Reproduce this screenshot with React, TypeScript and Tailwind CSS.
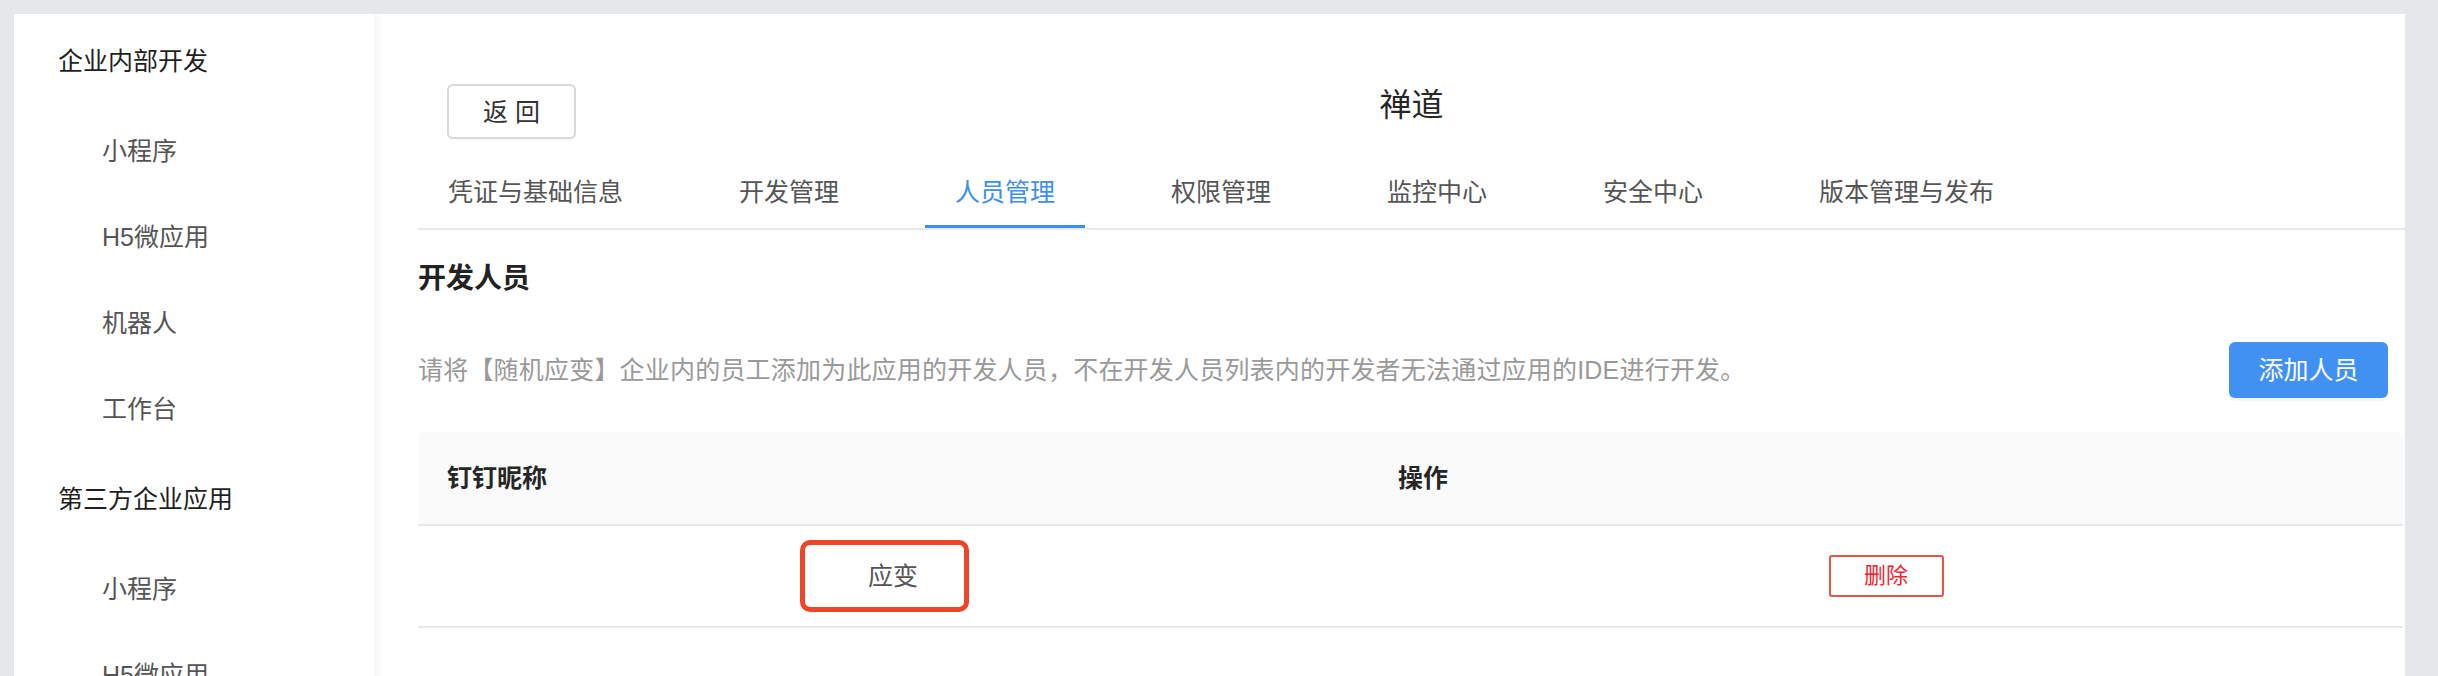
import React from 'react';

const sideGroups = [
  { title: '企业内部开发', items: ['小程序', 'H5微应用', '机器人', '工作台'] },
  { title: '第三方企业应用', items: ['小程序', 'H5微应用', '机器人', '工作台'] },
];

const tabs = ['凭证与基础信息', '开发管理', '人员管理', '权限管理', '监控中心', '安全中心', '版本管理与发布'];
const activeTab = '人员管理';

const Sidebar: React.FC = () => (
  <aside className="w-[360px] shrink-0 bg-white overflow-hidden">
    {sideGroups.map((group) => (
      <div key={group.title}>
        <div className="h-[94px] flex items-center pl-[44px] text-[25px] leading-[32px] text-[#1f1f1f]">
          {group.title}
        </div>
        {group.items.map((item) => (
          <div key={item} className="h-[86px] flex items-center pl-[88px] text-[25px] leading-[32px] text-[#555555]">
            {item}
          </div>
        ))}
      </div>
    ))}
  </aside>
);

const MemberTable: React.FC = () => (
  <div className="mt-[34px] mr-[2px]">
    {/* header */}
    <div className="grid grid-cols-[951px_1fr] h-[94px] bg-[#fafafa] rounded-t-[6px] border-b-2 border-[#e8e8e8] items-center">
      <div className="pl-[29px] text-[25px] leading-[32px] font-bold text-[#262626]">钉钉昵称</div>
      <div className="pl-[29px] text-[25px] leading-[32px] font-bold text-[#262626]">操作</div>
    </div>
    {/* rows */}
    <div className="grid grid-cols-[951px_1fr] h-[102px] border-b-2 border-[#e8e8e8] items-center">
      <div className="flex justify-center">
        <div className="mr-[18px] w-[169px] h-[72px] border-[5px] border-[#ee4528] rounded-[10px] flex items-center justify-center pl-[17px] text-[25px] leading-[32px] text-[#555555]">
          应变
        </div>
      </div>
      <div className="flex justify-center">
        <button className="w-[115px] h-[42px] border-2 border-[#e4574a] rounded-[3px] text-[22px] leading-[28px] text-[#f5222d] bg-white">
          删除
        </button>
      </div>
    </div>
  </div>
);

const App: React.FC = () => {
  return (
    <div className="w-[2438px] h-[676px] flex bg-[#e6e7eb] pt-[14px] pl-[14px] pr-[33px] overflow-hidden font-[family-name:'Liberation_Sans','Noto_Sans_CJK_SC',sans-serif]">
      <Sidebar />

      <main className="flex-1 bg-white pl-[44px] shadow-[inset_12px_0_10px_-8px_rgba(0,0,0,0.045)] overflow-hidden">
        {/* Title bar */}
        <div className="grid grid-cols-[1fr_auto_1fr] items-start pt-[70px]">
          <button className="justify-self-start ml-[29px] w-[129px] h-[55px] border-2 border-[#d9d9d9] rounded-[6px] bg-white shadow-[0_2px_0_rgba(0,0,0,0.03)] text-[25px] leading-[32px] text-[#333333]">
            返 回
          </button>
          <h1 className="mt-[5px] text-[32px] leading-[32px] text-[#262626]">禅道</h1>
          <div />
        </div>

        {/* Tabs */}
        <div className="flex gap-[56px] border-b-2 border-[#e9e9e9]">
          {tabs.map((tab) => (
            <div
              key={tab}
              className={
                tab === activeTab
                  ? 'px-[30px] pt-[38px] pb-[18px] border-b-[3px] border-[#3d8ef0] text-[25px] leading-[30px] text-[#3d8ef0]'
                  : 'px-[30px] pt-[38px] pb-[18px] border-b-[3px] border-transparent text-[25px] leading-[30px] text-[#555555]'
              }
            >
              {tab}
            </div>
          ))}
        </div>

        {/* Developers section */}
        <h2 className="mt-[31px] text-[28px] leading-[36px] font-bold text-[#222222]">开发人员</h2>

        <div className="mt-[45px] flex items-center justify-between pr-[17px]">
          <p className="text-[25px] leading-[32px] tracking-[0.2px] text-[#999999]">
            请将【随机应变】企业内的员工添加为此应用的开发人员，不在开发人员列表内的开发者无法通过应用的IDE进行开发。
          </p>
          <button className="w-[159px] h-[56px] rounded-[6px] bg-[#4191f3] text-white text-[25px] leading-[32px] shadow-[0_3px_0_rgba(0,0,0,0.04)]">
            添加人员
          </button>
        </div>

        <MemberTable />
      </main>
    </div>
  );
};

export default App;
